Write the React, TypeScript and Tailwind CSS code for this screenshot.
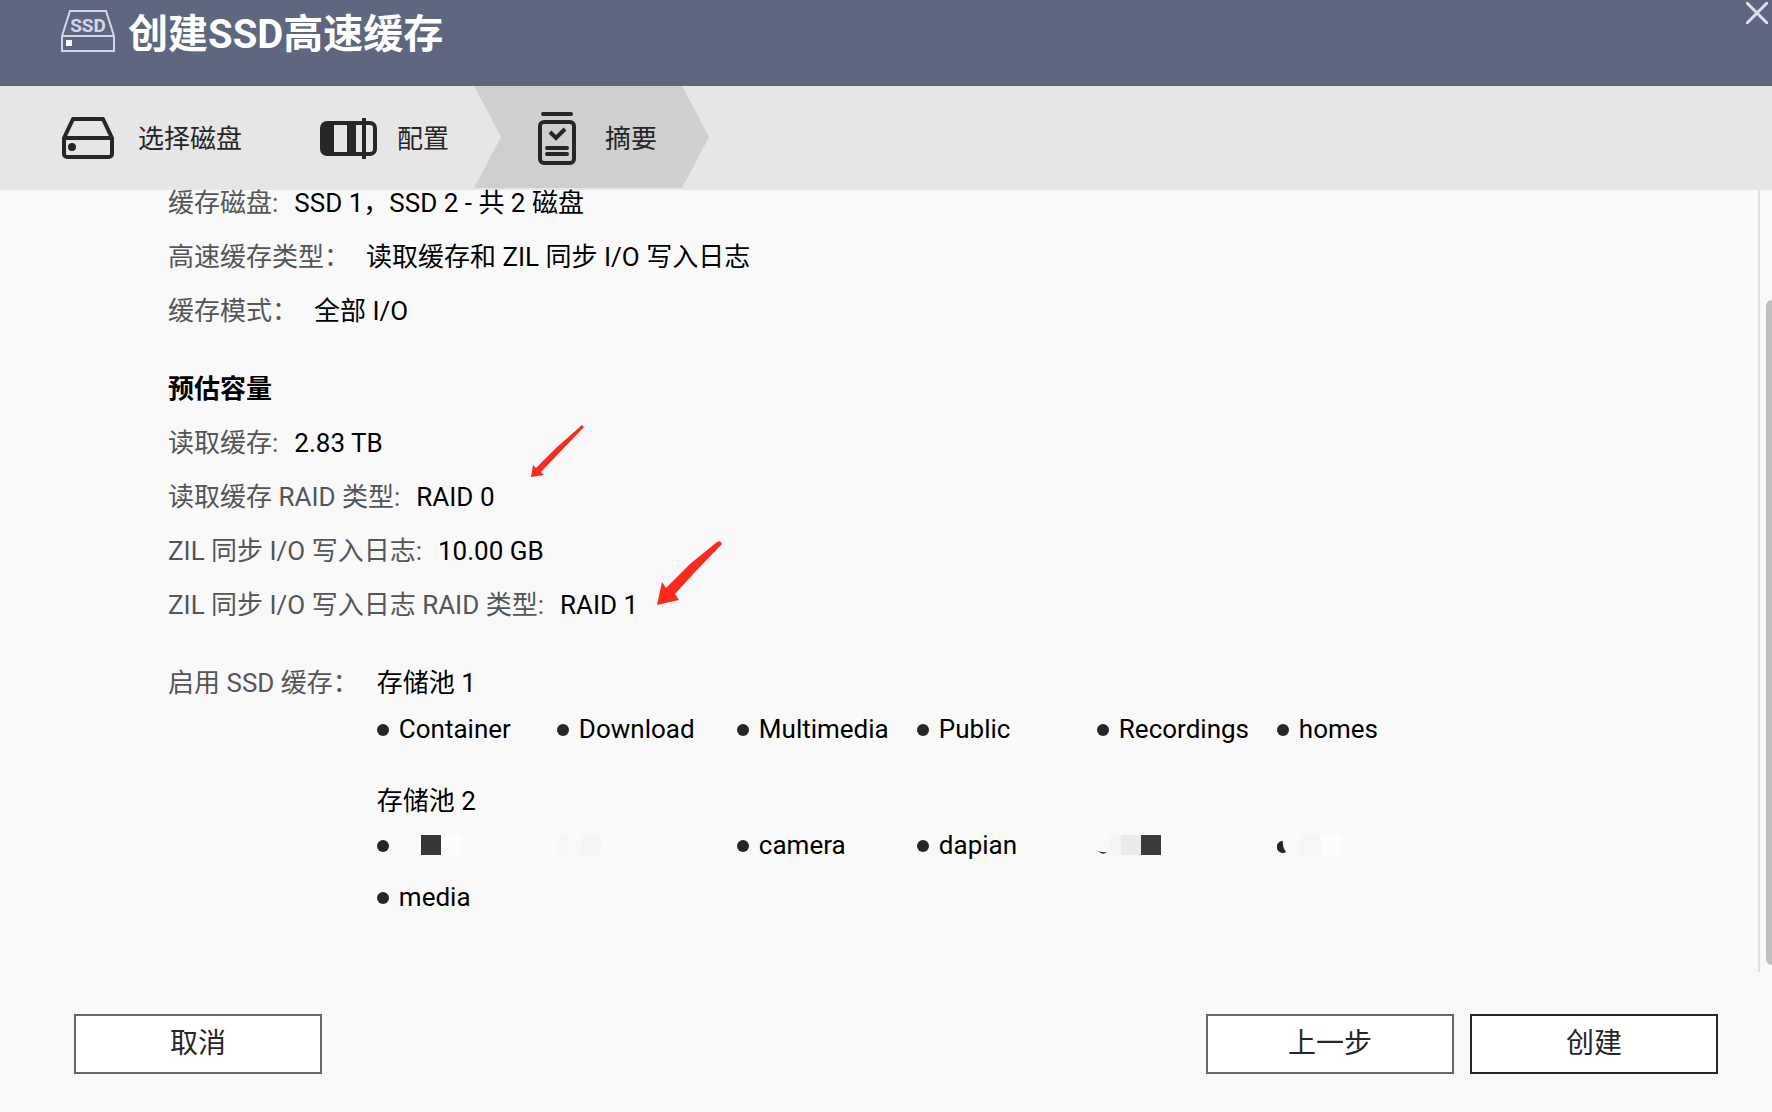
const steps = [
  { label: '选择磁盘', icon: <DiskIcon /> },
  { label: '配置', icon: <ConfigIcon /> },
];

const cacheRows = [
  { label: '缓存磁盘:', value: 'SSD 1，SSD 2 - 共 2 磁盘' },
  { label: '高速缓存类型：', value: '读取缓存和 ZIL 同步 I/O 写入日志' },
  { label: '缓存模式：', value: '全部 I/O' },
];

const capacityRows = [
  { label: '读取缓存:', value: '2.83 TB' },
  { label: '读取缓存 RAID 类型:', value: 'RAID 0' },
  { label: 'ZIL 同步 I/O 写入日志:', value: '10.00 GB' },
  { label: 'ZIL 同步 I/O 写入日志 RAID 类型:', value: 'RAID 1' },
];

const poolOne = ['Container', 'Download', 'Multimedia', 'Public', 'Recordings', 'homes'];

function SsdIcon() {
  return (
    <svg width="54" height="44" viewBox="0 0 54 44" fill="none" stroke="#d3d6e6" strokeWidth="2">
      <path d="M1 27 9 2h36l8 25v15H1zM1 27h52" />
      <rect x="5" y="31" width="6" height="6" fill="#fff" stroke="none" />
      <text x="27" y="23" textAnchor="middle" fill="#d3d6e6" stroke="none" fontSize="19" fontWeight="700" fontFamily="Roboto, sans-serif">SSD</text>
    </svg>
  );
}

function DiskIcon() {
  return (
    <svg width="54" height="44" viewBox="0 0 54 44" fill="none" stroke="#262626" strokeWidth="4" strokeLinejoin="round">
      <path d="M3 22 12 3h30l9 19v16a3 3 0 0 1-3 3H6a3 3 0 0 1-3-3zM3 22h48" />
      <circle cx="11" cy="31" r="4" fill="#262626" stroke="none" />
    </svg>
  );
}

function ConfigIcon() {
  return (
    <svg className="overflow-visible" width="54" height="44" viewBox="0 0 54 44" fill="none" stroke="#262626">
      <rect x="2" y="7" width="53" height="31" rx="5" strokeWidth="4" />
      <path d="M2 11a4 4 0 0 1 4-4h8v31H6a4 4 0 0 1-4-4zM27 7h9v31h-9z" fill="#262626" stroke="none" />
      <path d="M44 2v41" strokeWidth="4" />
    </svg>
  );
}

function SummaryIcon() {
  return (
    <svg width="40" height="54" viewBox="0 0 40 54" fill="none" stroke="#262626" strokeWidth="4">
      <path d="M6 3h28M10 37h20M10 43h20" strokeLinecap="round" />
      <rect x="3" y="11" width="34" height="41" rx="4" />
      <path d="m13 21 6 6 9-9" />
    </svg>
  );
}

function Row({ label, value }: { label: string; value: string }) {
  return (
    <div className="flex gap-4">
      <dt className="text-[#555]">{label}</dt>
      <dd>{value}</dd>
    </div>
  );
}

function Bullet() {
  return <span className="mt-[2px] size-3 shrink-0 rounded-full bg-[#262626]" />;
}

function Share({ name }: { name: string }) {
  return (
    <li className="flex items-center gap-[10px]">
      <Bullet />
      {name}
    </li>
  );
}

export default function App() {
  return (
    <div className="flex min-h-screen flex-col bg-[#f9f9f9] font-[Roboto,'Noto_Sans_CJK_SC',sans-serif] text-[26px] leading-[26px] text-black">
      <header className="flex h-[86px] items-start justify-between bg-[#5f6780] pl-[61px] text-white">
        <div className="flex items-start gap-[13px] pt-[9px]">
          <SsdIcon />
          <h1 className="text-[40px] leading-[52px] font-bold">创建SSD高速缓存</h1>
        </div>
        <button type="button" aria-label="关闭" className="pt-[2px] pr-1">
          <svg width="22" height="22" viewBox="0 0 22 22" stroke="#dddfea" strokeWidth="3">
            <path d="m0 0 22 22M22 0 0 22" />
          </svg>
        </button>
      </header>

      <nav className="h-[104px] bg-[#e6e6e6] text-[#262626]">
        <ol className="flex h-full items-center">
          {steps.map((step) => (
            <li key={step.label} className="flex items-center gap-[23px] pl-[61px] nth-2:pl-[78px]">
              {step.icon}
              <span className="pt-[2px]">{step.label}</span>
            </li>
          ))}
          <li
            aria-current="step"
            className="ml-[25px] flex h-[102px] w-[235px] items-center gap-7 self-start bg-[#cfcfcf] pt-[2px] pl-[63px] [clip-path:polygon(0_0,208px_0,100%_50%,208px_100%,0_100%,27px_50%)]"
          >
            <SummaryIcon />
            <span className="pt-[2px]">摘要</span>
          </li>
        </ol>
      </nav>

      <main className="relative flex-1 pl-[168px]">
        <div className="flex flex-col gap-[52px]">
          <dl className="flex flex-col gap-7">
            {cacheRows.map((row) => (
              <Row key={row.label} {...row} />
            ))}
          </dl>

          <section className="relative flex flex-col gap-7">
            <h2 className="font-bold">预估容量</h2>
            <dl className="flex flex-col gap-7">
              {capacityRows.map((row) => (
                <Row key={row.label} {...row} />
              ))}
            </dl>
            <svg className="absolute top-[49px] left-[360px]" width="200" height="190" viewBox="0 0 200 190" fill="#fa2a1e">
              <path d="M3 52 5 40l3 3L28 23 54 0l2 2-25 26-18 19 3 3z" />
              <path d="m129 180 5-23 4 6 24-24 27-22q4-2 5 2l-27 28-20 22 4 6z" />
            </svg>
          </section>

          <section className="flex gap-[18px]">
            <h2 className="shrink-0 text-[#555]">启用 SSD 缓存：</h2>
            <div>
              <h3>存储池 1</h3>
              <ul className="mt-5 grid grid-cols-[repeat(6,180px)] gap-y-[26px]">
                {poolOne.map((name) => (
                  <Share key={name} name={name} />
                ))}
              </ul>
              <h3 className="mt-[46px]">存储池 2</h3>
              <ul className="mt-[18px] grid grid-cols-[repeat(6,180px)] gap-y-[26px]">
                <li className="flex items-center">
                  <Bullet />
                  <span className="ml-8 size-5 bg-[#363636]" />
                  <span className="size-5 bg-[#fcfcfc]" />
                </li>
                <li className="flex items-center">
                  <span className="h-5 w-3 bg-[#f7f7f7]" />
                  <span className="ml-3 size-5 bg-[#f5f5f5]" />
                </li>
                <Share name="camera" />
                <Share name="dapian" />
                <li className="flex items-center">
                  <svg className="mt-[6px]" width="12" height="12" viewBox="0 0 12 12" fill="#262626">
                    <path d="M1 9q5 2 9 1-4 4-9-1z" />
                  </svg>
                  <span className="h-5 w-3 bg-[#f5f5f5]" />
                  <span className="size-5 bg-[#ebebeb]" />
                  <span className="size-5 bg-[#3a3a3a]" />
                </li>
                <li className="flex items-center">
                  <svg className="mt-1" width="12" height="12" viewBox="0 0 12 12" fill="#262626">
                    <path d="M6 0Q5 6 9 11A6 6 0 1 1 6 0z" />
                  </svg>
                  <span className="ml-3 size-5 bg-[#f6f6f6]" />
                  <span className="size-5 bg-[#fcfcfc]" />
                </li>
                <Share name="media" />
              </ul>
            </div>
          </section>
        </div>
        <div className="absolute inset-y-0 right-0 w-[14px] border-l-2 border-[#e0e0e0]">
          <div className="absolute top-[110px] right-0 h-[665px] w-[6px] rounded-l-md bg-[#bfbfbf]" />
        </div>
      </main>

      <footer className="flex gap-4 pt-[42px] pr-[54px] pb-[38px] pl-[74px] text-[28px] text-[#262626]">
        <button type="button" className="mr-auto h-[60px] w-[248px] border-2 border-[#666] bg-white">取消</button>
        <button type="button" className="h-[60px] w-[248px] border-2 border-[#666] bg-white">上一步</button>
        <button type="button" className="h-[60px] w-[248px] border-2 border-[#262626] bg-white">创建</button>
      </footer>
    </div>
  );
}
